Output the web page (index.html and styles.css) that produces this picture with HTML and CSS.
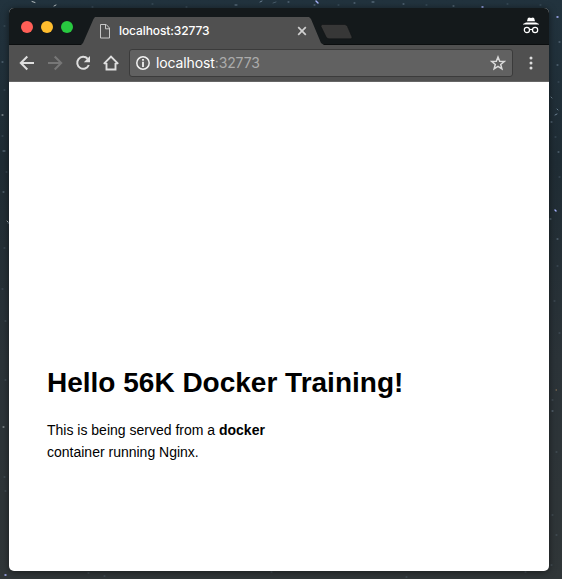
FILE: index.html
```html
<!DOCTYPE html>
<html lang="en">
<head>
<meta charset="utf-8">
<title>localhost:32773</title>
<link rel="stylesheet" href="styles.css">
</head>
<body>
<svg class="stars" width="562" height="579" fill="none" stroke="#8da4b8" stroke-width="1" stroke-linecap="round" aria-hidden="true">
  <path stroke="#b9c1c4" d="M32 1.500l3 1M54 6l2-1M2 115h1M7 221l1 1M3 427h1"/>
  <path stroke="#a9b4ff" stroke-width="1.400" d="M316 1l2 2M482 7h1M557 17h1M555 210l1 1M5 575h1"/>
  <path opacity=".7" d="M235 5h2M260 2l2-1M288 2h1M314 5h1M354 3h1M372 2h2M403 4h1M453 6h1M557 65h1M559 42h1M551 97l1 1M557 109l1 1M555 115l2-1M551 122h1M558 152h1M550 219h1M557 239h1M552 411h1M3 151h2M3 192h1M2 62h1M8 223h1"/>
  <path opacity=".35" d="M92 7h1M152 4h1M186 7h1M273 3l3-1M338 5h1M426 5h1M507 4h1M540 5h1M4 26h1M4 90h1M2 136h1M6 172h1M4 248h1M2 289h1M5 321h1M5 380h1M5 491h1M4 477h1M558 82h1M555 137h1M559 177h1M557 266h1M554 301h1M559 333h1M552 400h1M556 452h1M552 515h1M556 535h1M551 565h1M88 573h1M104 576h1M271 572h1M406 577h1M525 572h1"/>
  <path stroke="#a4845f" d="M556 390h.5"/>
</svg>
<main class="window">
  <header class="titlebar">
    <div class="lights"><i class="close"></i><i class="minimize"></i><i class="maximize"></i></div>
    <div class="tab">
      <svg class="page-icon" width="12" height="15" viewBox="0 0 12 15" fill="none" stroke="#c8c8c8"><path d="M1.500.5h5.700l3.300 3.500v10h-9zM6.500.8v4h4"/></svg>
      <span class="tab-title">localhost:32773</span>
      <svg class="tab-close" width="10" height="10" viewBox="0 0 10 10" stroke="#d0d0d0" stroke-width="1.700"><path d="M1.200 1.200l7.600 7.600M8.800 1.200L1.200 8.800"/></svg>
    </div>
    <svg class="new-tab" width="34" height="16" viewBox="0 0 34 16"><path d="M2.500.5h22q2 0 3 2l4.500 10.500q.5 1.800-1.500 1.800H9q-2 0-3-2L1 2.500Q.5.500 2.500.5z" fill="#373737" stroke="#101415" stroke-width=".6"/></svg>
    <svg class="incognito" width="18" height="18" viewBox="0 0 18 18">
      <path d="M5.800 1.200l1.200-.7L9 1l2-.5 1.200.7.8 3.100H5zM4 5.400h10l3 1.600v.6H1V7z" fill="#fff"/>
      <g fill="none" stroke="#fff" stroke-width="1.200"><circle cx="4.900" cy="13" r="2.600"/><circle cx="13.100" cy="13" r="2.600"/><path d="M7.500 12.700q1.500-.8 3 0"/></g>
    </svg>
  </header>
  <nav class="toolbar">
    <svg class="tool" width="16" height="16" viewBox="0 0 16 16" fill="none" stroke="#dedede" stroke-width="2"><path d="M15 8H2M8.300 1.500L1.800 8l6.500 6.500"/></svg>
    <svg class="tool" width="16" height="16" viewBox="0 0 16 16" fill="none" stroke="#777" stroke-width="2"><path d="M1 8h13M7.700 1.500L14.200 8l-6.500 6.500"/></svg>
    <svg class="tool" width="16" height="16" viewBox="0 0 16 16" fill="none" stroke="#dedede" stroke-width="2"><path d="M12.600 3.700A6 6 0 1 0 13.800 10"/><path d="M15 1v6.200H8.800z" fill="#dedede" stroke="none"/></svg>
    <svg class="tool" width="16" height="16" viewBox="0 0 16 16" fill="none" stroke="#dedede" stroke-width="1.900"><path d="M3.500 8v6.500h9V8M.8 8.800L8 1.600l7.200 7.200M1 8.400h2.500M12.500 8.400H15"/></svg>
    <div class="address">
      <svg width="14" height="14" viewBox="0 0 14 14"><circle cx="7" cy="7" r="6.200" fill="none" stroke="#f2f2f2" stroke-width="1.500"/><path d="M6.100 3h1.800v1.700H6.100zM6.100 5.800h1.800V11H6.100z" fill="#f2f2f2"/></svg>
      <span class="url">localhost<span>:32773</span></span>
      <svg class="bookmark" width="16" height="16" viewBox="0 0 16 16" fill="none" stroke="#dadada" stroke-width="1.500"><path d="M8 2l1.700 4.200 4.500.3-3.500 2.900 1.200 4.500L8 11.400l-3.900 2.500 1.200-4.500-3.500-2.900 4.500-.3z"/></svg>
    </div>
    <svg class="menu" width="4" height="14" viewBox="0 0 4 14" fill="#dedede"><circle cx="2" cy="2" r="1.500"/><circle cx="2" cy="7" r="1.500"/><circle cx="2" cy="12" r="1.500"/></svg>
  </nav>
  <section class="content">
    <h1>Hello 56K Docker Training!</h1>
    <p>This is being served from a <strong>docker</strong> container running Nginx.</p>
  </section>
</main>
</body>
</html>
```

FILE: styles.css
```css
* { box-sizing: border-box; }
body {
  margin: 0;
  height: 579px;
  padding: 8px 13px 8px 9px;
  overflow: hidden;
  background: linear-gradient(#22333e, #1f2c34 28%, #2b3338 62%, #303638);
  font-family: "Liberation Sans", Arial, sans-serif;
}
.stars { position: absolute; top: 0; left: 0; }
.window {
  position: relative;
  height: 563px;
  display: flex;
  flex-direction: column;
  border-radius: 5px;
  overflow: hidden;
  background: #fff;
  box-shadow: 0 1px 7px rgba(0, 0, 0, .5);
}
.titlebar {
  flex: none;
  height: 37px;
  display: flex;
  background: #14191b;
  box-shadow: inset 0 -1px #0b0e0f;
}
.lights { display: flex; gap: 8px; padding: 13px 0 0 12px; width: 72px; }
.lights i { width: 12px; height: 12px; border-radius: 50%; }
.close { background: #ff5f57; }
.minimize { background: #ffbd2e; }
.maximize { background: #28c940; }
.tab {
  width: 243px;
  height: 28px;
  margin-top: 9px;
  padding: 0 17px 0 18px;
  display: flex;
  align-items: center;
  background: #505050;
  clip-path: polygon(0 100%, 2px 26px, 12.500px 2px, 14px 0, 228px 0, 230px 2px, 240px 26px, 100% 100%);
}
.tab-title {
  margin-left: 8px;
  font: 500 12px/28px Inter, sans-serif;
  letter-spacing: -.1px;
  color: #fff;
}
.tab-close { margin-left: auto; }
.new-tab { margin: 16px 0 0 -4px; }
.incognito { margin: 9px 9px 0 auto; }
.toolbar {
  flex: none;
  height: 37px;
  display: flex;
  align-items: center;
  padding: 0 16px 1px 10px;
  background: #505050;
  box-shadow: inset 0 -1px #666;
}
.tool { margin-right: 12px; }
.address {
  width: 384px;
  height: 28px;
  margin-left: -2px;
  padding: 0 6px;
  display: flex;
  align-items: center;
  border: 1px solid #3b3b3b;
  border-radius: 3px;
  background: #616161;
}
.url {
  margin-left: 6px;
  font: 400 14px/26px Inter, sans-serif;
  letter-spacing: -.12px;
  color: #fff;
}
.url span { color: #ababab; }
.bookmark { margin-left: auto; }
.menu { margin-left: auto; }
.content { padding: 285px 38px 0; color: #000; }
h1 { margin: 0; font-size: 28px; line-height: 32px; white-space: nowrap; }
p { margin: 20px 0 0; width: 235px; font-size: 14px; line-height: 22px; }
```
